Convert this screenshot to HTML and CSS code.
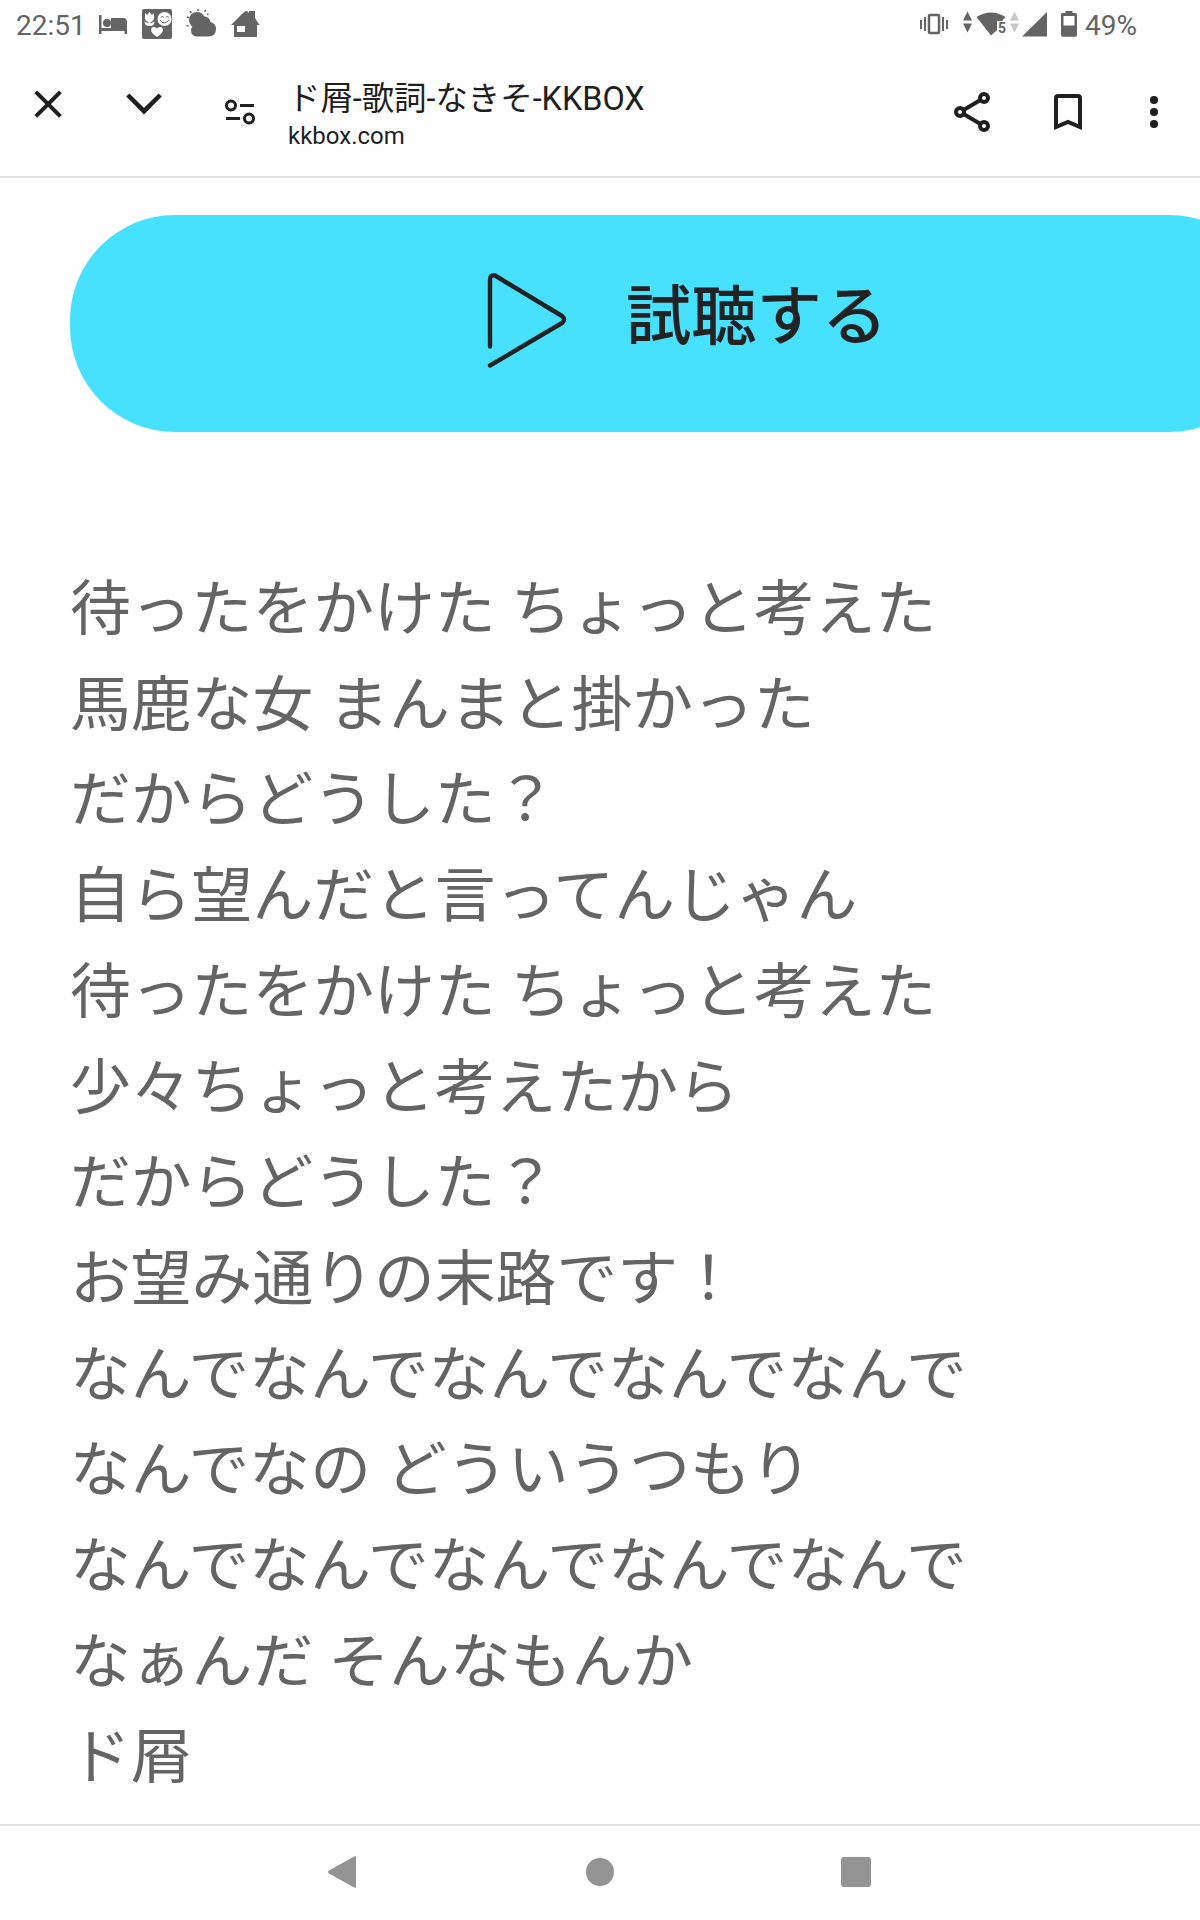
FILE: index.html
```html
<!DOCTYPE html>
<html lang="ja">
<head>
    <meta charset="utf-8">
    <title>ド屑-歌詞-なきそ-KKBOX</title>
    <link rel="stylesheet" href="styles.css">
</head>
<body>
    <div class="statusbar">
        <div class="status-left">
            <span class="clock">22:51</span>
            <!-- bed -->
            <svg width="30" height="50" viewBox="98 0 30 50" fill="#646464">
                <path d="M99 15h2.500v13h9.500V18h12q4 0 4 4v12h-2.500v-3h-23v3h-2.500z"/>
                <circle cx="107" cy="23" r="4"/>
            </svg>
            <!-- tulip, smile and heart -->
            <svg width="30" height="50" viewBox="142 0 30 50">
                <rect x="142" y="9" width="30" height="30" rx="2" fill="#646464"/>
                <path d="M145 13l2.200 2 2.300-3 2.300 3 2.200-2v5q0 3-3.500 4v1.500l4-2q0 4.500-4.800 4.500-5.200 0-5.200-4.500l4 2V22q-3.500-1-3.500-4z" fill="#fff"/>
                <circle cx="164.500" cy="19" r="7" fill="#fff"/>
                <path d="M160 20q4 6 9 0M161 17.500l1.500-1.500 1 1.500M166 17.500l1.500-1.500 1 1.500" fill="none" stroke="#646464" stroke-width="1"/>
                <path d="M157 37q-6-4-6-7 0-3 3-3 2 0 3 1.500 1-1.500 3-1.500 3 0 3 3 0 3-6 7z" fill="#fff"/>
            </svg>
            <!-- sun and cloud -->
            <svg width="31" height="50" viewBox="186 0 31 50" fill="#646464">
                <circle cx="197" cy="20" r="8"/>
                <path d="M196 36.500q-5-1-5-6t5-6q2-9 9-8 5 1 5.500 5.500 5.500 1.500 5.500 7 0 7.500-8 7.500z"/>
                <path d="M190 11l1.500 2M198 9v2M206 10l-1.500 1.500M187 17l2 .7M186.500 26l2-.5M207 14.500l1.500-.5" stroke="#646464" stroke-width="1.500"/>
            </svg>
            <!-- house -->
            <svg width="29" height="50" viewBox="231 0 29 50" fill="#646464">
                <path fill-rule="evenodd" d="M231 25l12-12q2-2 4-2l2 2V11h6v7l4.500 7H257v12h-23V25zM237 26v6h8v-6z"/>
            </svg>
        </div>
        <div class="status-right">
            <!-- vibrate -->
            <svg width="28" height="50" viewBox="920 0 28 50">
                <path d="M921 20v9M925 17v14M943 17v14M947 20v9" stroke="#646464" stroke-width="2"/>
                <rect x="929" y="15" width="10" height="18" rx="1" fill="none" stroke="#646464" stroke-width="2.500"/>
            </svg>
            <!-- wifi with traffic arrows -->
            <svg width="56" height="50" viewBox="963 0 56 50" fill="#646464">
                <path d="M963 20.500l4.500-9 4.500 9zM963 23.500h9l-4.500 9z"/>
                <path d="M976.500 17q14.500-9 29 0l-3.500 4h-5v9l-6 5.500z"/>
                <path d="M1010 20.500l4.500-9 4.500 9zM1010 23.500h9l-4.500 9z" fill="#c8c8c8"/>
                <text class="wifi-band" x="998" y="33">5</text>
            </svg>
            <!-- signal -->
            <svg width="25" height="50" viewBox="1022 0 25 50" fill="#646464">
                <path d="M1022 36.500L1047 12v24.500z"/>
            </svg>
            <!-- battery -->
            <svg class="battery" width="16" height="50" viewBox="1061 0 16 50" fill="#646464">
                <path fill-rule="evenodd" d="M1065.500 13v-2h7v2h3q1.500 0 1.500 1.500V35q0 1.700-1.500 1.700h-13q-1.500 0-1.500-1.700V14.500q0-1.500 1.500-1.500zM1063.500 16v9.500h11V16z"/>
            </svg>
            <span class="percent">49%</span>
        </div>
    </div>

    <div class="toolbar">
        <!-- close -->
        <svg class="close" width="28" height="126" viewBox="34 50 28 126">
            <path d="M35.800 91.800l24.600 24.600M60.400 91.800l-24.600 24.600" stroke="#1f1f1f" stroke-width="4"/>
        </svg>
        <!-- chevron -->
        <svg class="chevron" width="36" height="126" viewBox="126 50 36 126">
            <path d="M127.800 95L144 111.200 160.200 95" fill="none" stroke="#1f1f1f" stroke-width="4.500"/>
        </svg>
        <!-- site settings -->
        <svg class="tune" width="32" height="126" viewBox="224 50 32 126">
            <g fill="none" stroke="#1f1f1f" stroke-width="3">
                <circle cx="231" cy="105.500" r="4.500"/>
                <circle cx="249" cy="118.500" r="4.500"/>
                <path d="M240 105.500h14M226 118.500h14"/>
            </g>
        </svg>
        <div class="page-info">
            <div class="page-title">ド屑-歌詞-なきそ-KKBOX</div>
            <div class="page-host">kkbox.com</div>
        </div>
        <div class="actions">
            <!-- share -->
            <svg width="38" height="126" viewBox="953 50 38 126">
                <g fill="none" stroke="#1f1f1f" stroke-width="4">
                    <circle cx="960" cy="112" r="4"/>
                    <circle cx="984" cy="98" r="4"/>
                    <circle cx="984" cy="126" r="4"/>
                    <path d="M963.500 110l17-10M963.500 114l17 10"/>
                </g>
            </svg>
            <!-- bookmark -->
            <svg width="28" height="126" viewBox="1054 50 28 126">
                <path d="M1056 127V98q0-2 2-2h20q2 0 2 2v29l-12-5z" fill="none" stroke="#1f1f1f" stroke-width="4"/>
            </svg>
            <!-- menu -->
            <svg width="8" height="126" viewBox="1150 50 8 126" fill="#1f1f1f">
                <circle cx="1154" cy="100" r="4"/>
                <circle cx="1154" cy="112" r="4"/>
                <circle cx="1154" cy="124" r="4"/>
            </svg>
        </div>
    </div>

    <div class="content">
        <a class="listen">
            <svg width="80" height="96" viewBox="487 272.500 80 96">
                <path d="M490 346v-67q0-5 5-4l67 40.500q4 3.500 0 7L490 365" fill="none" stroke="#222" stroke-width="4.400" stroke-linecap="round" stroke-linejoin="round"/>
            </svg>
            <span class="listen-label">試聴する</span>
        </a>
        <div class="lyrics">
            待ったをかけた ちょっと考えた<br>
            馬鹿な女 まんまと掛かった<br>
            だからどうした？<br>
            自ら望んだと言ってんじゃん<br>
            待ったをかけた ちょっと考えた<br>
            少々ちょっと考えたから<br>
            だからどうした？<br>
            お望み通りの末路です！<br>
            なんでなんでなんでなんでなんで<br>
            なんでなの どういうつもり<br>
            なんでなんでなんでなんでなんで<br>
            なぁんだ そんなもんか<br>
            ド屑
        </div>
    </div>

    <div class="navbar">
        <svg width="30" height="32" viewBox="0 0 30 32" fill="#949494">
            <path d="M26 .5q2-1 2 1v29q0 2-2 1L1 17.500q-2-1.500 0-3z"/>
        </svg>
        <svg width="28" height="28" viewBox="0 0 28 28" fill="#949494">
            <circle cx="14" cy="14" r="14"/>
        </svg>
        <svg width="30" height="30" viewBox="0 0 30 30" fill="#949494">
            <rect width="30" height="30" rx="3"/>
        </svg>
    </div>
</body>
</html>
```
FILE: styles.css
```css
* {
    box-sizing: border-box;
}

body {
    margin: 0;
    height: 1920px;
    display: flex;
    flex-direction: column;
    background-color: #fefefe;
    font-family: Roboto, "Noto Sans CJK JP", sans-serif;
    overflow: hidden;
}

svg {
    display: block;
    flex: none;
}

/* Status bar */
.statusbar {
    display: flex;
    justify-content: space-between;
    height: 50px;
    padding: 0 63px 0 16px;
    color: #646464;
    font-size: 28px;
    line-height: 51px;
}

.status-left {
    display: flex;
    gap: 14px;
}

.clock {
    width: 68px;
}

.status-right {
    display: flex;
}

.status-right svg:first-child {
    margin-right: 15px;
}

.status-right svg:nth-child(3) {
    margin-left: 3px;
}

.status-right .battery {
    margin: 0 8px 0 14px;
}

.percent {
    width: 52px;
}

.wifi-band {
    font-size: 14px;
    font-weight: 700;
}

/* Browser toolbar */
.toolbar {
    display: flex;
    height: 128px;
    padding: 0 42px 0 34px;
    border-bottom: 2px solid #e1e1e1;
    color: #1f1f1f;
}

.chevron {
    margin-left: 64px;
}

.tune {
    margin-left: 62px;
}

.page-info {
    margin-left: 32px;
    padding-top: 26px;
    white-space: nowrap;
}

.page-title {
    font-size: 32.4px;
    line-height: 46px;
}

.page-host {
    font-size: 24px;
    line-height: 28px;
}

.actions {
    display: flex;
    margin-left: auto;
}

.actions svg + svg {
    margin-left: 63px;
}

.actions svg:last-child {
    margin-left: 68px;
}

/* Page */
.content {
    flex: 1;
    padding: 37px 0 0 70px;
    overflow: hidden;
}

.listen {
    display: flex;
    align-items: center;
    width: 1204px;
    height: 217px;
    padding-left: 417px;
    padding-bottom: 6px;
    border-radius: 105px;
    background-color: #47e0ff;
    color: #222;
}

.listen-label {
    margin-left: 59px;
    padding-bottom: 20px;
    font-family: "Noto Sans CJK JP", sans-serif;
    font-size: 65.3px;
    font-weight: 500;
    line-height: 90px;
}

.lyrics {
    margin-top: 124px;
    color: #646464;
    font-family: "Noto Sans CJK JP", sans-serif;
    font-size: 60.8px;
    line-height: 95.7px;
    word-spacing: 1.5px;
    white-space: nowrap;
}

/* System navigation */
.navbar {
    display: flex;
    align-items: center;
    justify-content: space-between;
    height: 96px;
    padding: 0 329px 2px 328px;
    border-top: 2px solid #e1e1e1;
}
```
